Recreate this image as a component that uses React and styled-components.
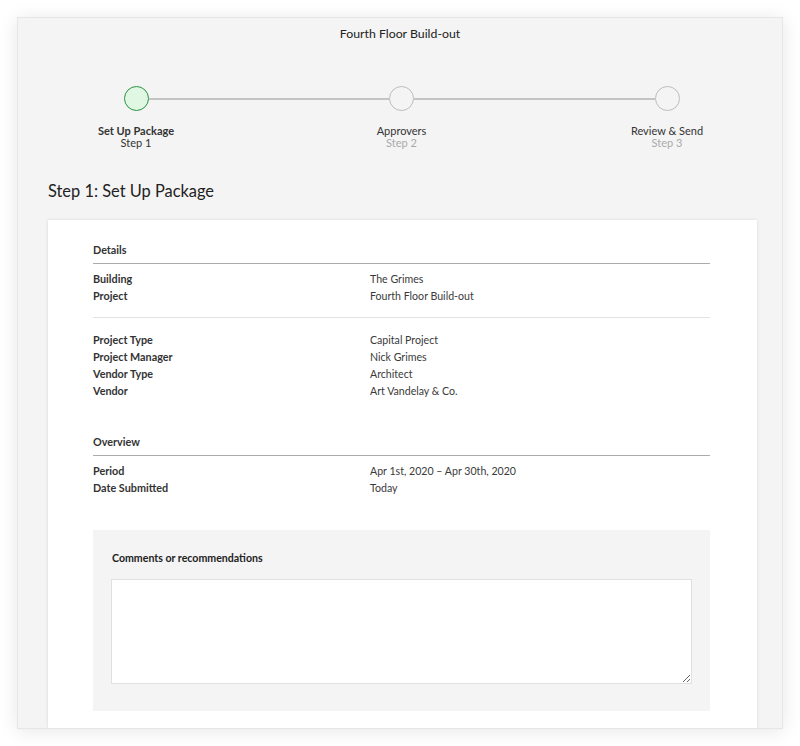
import React from "react";
import styled, { createGlobalStyle } from "styled-components";

const GlobalStyle = createGlobalStyle`
  html, body { margin: 0; padding: 0; background: #ffffff; }
  body { font-family: Lato, "Open Sans", Arial, sans-serif; color: #333; -webkit-font-smoothing: antialiased; }
  * { box-sizing: border-box; }
`;

const Page = styled.div`
  padding: 17px;
  height: 746px;
`;

const Panel = styled.div`
  height: 712px;
  background: #f4f4f4;
  border: 1px solid #e6e6e6;
  box-shadow: 0 2px 18px rgba(0, 0, 0, 0.1);
  overflow: hidden;
  padding: 0 25px 0 30px;
  display: flex;
  flex-direction: column;
`;

const Title = styled.div`
  padding-top: 8px;
  text-align: center;
  font-size: 12.3px;
  line-height: 15px;
  color: #222;
  margin-left: -30px;
  margin-right: -25px;
`;

const Stepper = styled.div`
  display: flex;
  align-items: flex-start;
  margin: 45px 77.5px 0 75.5px;
`;

const Step = styled.div`
  width: 25px;
  display: flex;
  flex-direction: column;
  align-items: center;
`;

const Circle = styled.div`
  width: 25px;
  height: 25px;
  border-radius: 50%;
  border: 1.5px solid ${(p) => (p.$active ? "#2a9440" : "#bdbdbd")};
  background: ${(p) => (p.$active ? "#dff7e3" : "#f4f4f4")};
`;

const Connector = styled.div`
  flex: 1;
  height: 2px;
  margin-top: 11.5px;
  background: #c4c4c4;
`;

const StepName = styled.div`
  margin-top: 14px;
  white-space: nowrap;
  font-size: 11px;
  line-height: 12px;
  font-weight: ${(p) => (p.$active ? 700 : 400)};
  color: #333;
`;

const StepNum = styled.div`
  white-space: nowrap;
  font-size: 11px;
  line-height: 12px;
  color: ${(p) => (p.$active ? "#333" : "#aaa")};
`;

const Heading = styled.h1`
  margin: 31px 0 0;
  font-size: 16.4px;
  line-height: 22px;
  font-weight: 400;
  color: #222;
`;

const Card = styled.div`
  margin-top: 18px;
  flex: 1;
  background: #fff;
  box-shadow: 0 0 3px rgba(0, 0, 0, 0.12);
  padding: 23px 47px 17px 45px;
`;

const SectionTitle = styled.div`
  margin-top: ${(p) => p.$top || 0}px;
  font-size: 10.8px;
  line-height: 14px;
  font-weight: 700;
  color: #333;
  padding-bottom: 6px;
  border-bottom: 1px solid #ababab;
`;

const Group = styled.div`
  margin-top: ${(p) => p.$top || 0}px;
  padding-bottom: ${(p) => (p.$divided ? 12 : 0)}px;
  border-bottom: ${(p) => (p.$divided ? "1px solid #e3e3e3" : "none")};
`;

const Row = styled.div`
  display: grid;
  grid-template-columns: 277px 1fr;
  align-items: baseline;
  height: 17.3px;
  line-height: 17.3px;
  font-size: 10.8px;
`;

const Label = styled.div`
  font-weight: 700;
  color: #333;
`;

const Value = styled.div`
  font-size: 10.6px;
  color: #3a3a3a;
`;

const CommentBox = styled.div`
  margin-top: 34px;
  background: #f4f4f4;
  padding: 21px 18px 27px;
`;

const CommentLabel = styled.label`
  display: block;
  font-size: 10.6px;
  line-height: 14px;
  font-weight: 700;
  color: #222;
  padding-left: 1px;
`;

const TextArea = styled.textarea`
  display: block;
  margin-top: 14px;
  width: 100%;
  height: 105px;
  border: 1px solid #e0e0e0;
  background: #fff;
  font-family: inherit;
  font-size: 11px;
  outline: none;
  resize: both;
`;

const steps = [
  { name: "Set Up Package", num: "Step 1", active: true },
  { name: "Approvers", num: "Step 2" },
  { name: "Review & Send", num: "Step 3" },
];

const details1 = [
  ["Building", "The Grimes"],
  ["Project", "Fourth Floor Build-out"],
];
const details2 = [
  ["Project Type", "Capital Project"],
  ["Project Manager", "Nick Grimes"],
  ["Vendor Type", "Architect"],
  ["Vendor", "Art Vandelay & Co."],
];
const overview = [
  ["Period", "Apr 1st, 2020 \u2013 Apr 30th, 2020"],
  ["Date Submitted", "Today"],
];

const Rows = ({ items }) =>
  items.map(([k, v]) => (
    <Row key={k}>
      <Label>{k}</Label>
      <Value>{v}</Value>
    </Row>
  ));

export default function App() {
  return (
    <>
      <GlobalStyle />
      <Page>
        <Panel>
          <Title>Fourth Floor Build-out</Title>
          <Stepper>
            {steps.map((s, i) => (
              <React.Fragment key={s.num}>
                {i > 0 && <Connector />}
                <Step>
                  <Circle $active={s.active} />
                  <StepName $active={s.active}>{s.name}</StepName>
                  <StepNum $active={s.active}>{s.num}</StepNum>
                </Step>
              </React.Fragment>
            ))}
          </Stepper>
          <Heading>Step 1: Set Up Package</Heading>
          <Card>
            <SectionTitle>Details</SectionTitle>
            <Group $top={6} $divided>
              <Rows items={details1} />
            </Group>
            <Group $top={13}>
              <Rows items={details2} />
            </Group>
            <SectionTitle $top={35}>Overview</SectionTitle>
            <Group $top={6}>
              <Rows items={overview} />
            </Group>
            <CommentBox>
              <CommentLabel htmlFor="comments">Comments or recommendations</CommentLabel>
              <TextArea id="comments" />
            </CommentBox>
          </Card>
        </Panel>
      </Page>
    </>
  );
}
